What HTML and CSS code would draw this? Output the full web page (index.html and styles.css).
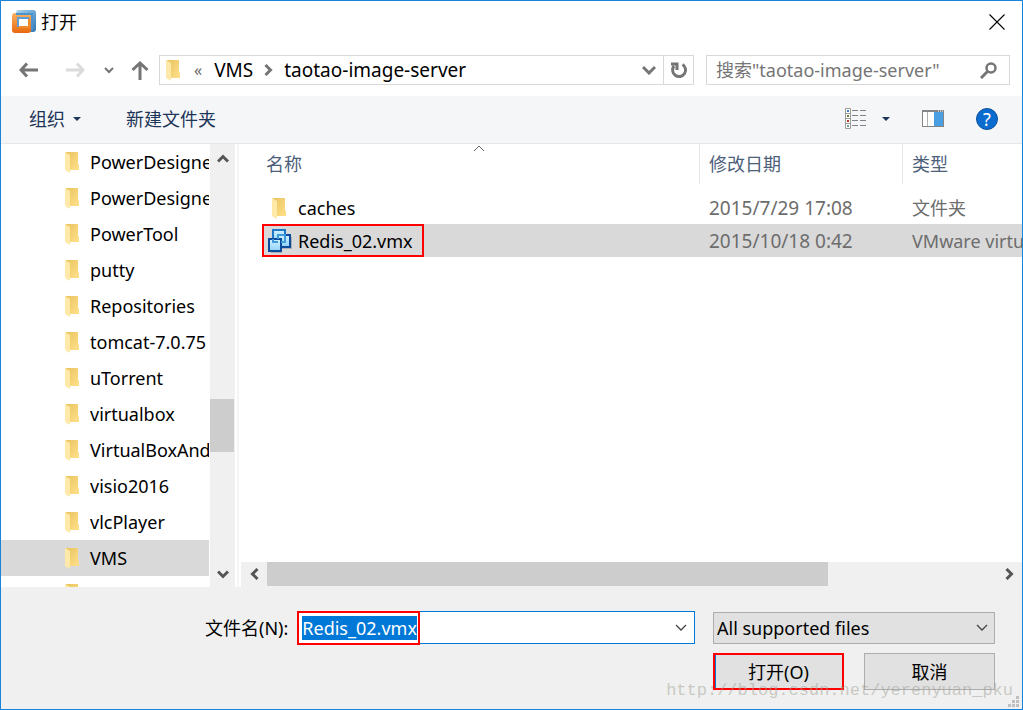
FILE: index.html
```html
<!DOCTYPE html>
<html lang="zh-CN">
<head>
<meta charset="utf-8">
<title>打开</title>
<link rel="stylesheet" href="styles.css">
</head>
<body>
<svg class="defs" aria-hidden="true">
  <defs>
    <linearGradient id="gBack" x1="0" y1="0" x2="1" y2="1"><stop offset="0" stop-color="#e9c35f"/><stop offset="1" stop-color="#ffe08a"/></linearGradient>
    <linearGradient id="gBlue" x1="0" y1="0" x2="1" y2="1"><stop offset="0" stop-color="#a9d6ee"/><stop offset="1" stop-color="#2f75b5"/></linearGradient>
    <linearGradient id="gOrange" x1="0" y1="0" x2="0" y2="1"><stop offset="0" stop-color="#fbb264"/><stop offset="1" stop-color="#e8680c"/></linearGradient>
    <linearGradient id="gVm" x1="0" y1="0" x2="0" y2="1"><stop offset="0" stop-color="#d3f2ff"/><stop offset="1" stop-color="#8fd2f8"/></linearGradient>
    <symbol id="folder" viewBox="0 0 15 22">
      <path d="M1 1H13V13L14 14V19H4Z" fill="url(#gBack)"/>
      <path d="M0 1L5 4V22L0 19Z" fill="#ffe9a8"/>
    </symbol>
  </defs>
</svg>
<main class="dialog">
  <header class="titlebar">
    <svg class="app-icon" width="24" height="24" viewBox="0 0 24 24" aria-hidden="true">
      <rect x="4" y="0" width="20" height="22" rx="3" fill="url(#gBlue)"/>
      <path d="M3 3H16Q19 3 19 6V20Q19 23 16 23H3Q0 23 0 20V6Q0 3 3 3Z" fill="url(#gOrange)"/>
      <path d="M4 4H20V20" fill="none" stroke="#4d94cd" stroke-width="2"/>
      <rect x="6" y="8" width="11" height="9" fill="#fff" stroke="#f08a2c" stroke-width="2"/>
      <path d="M6 17V8H17" fill="none" stroke="#5b9fd4" stroke-width="2"/>
    </svg>
    <h1 class="title">打开</h1>
    <button class="icon-btn close" aria-label="关闭"><svg width="16" height="16" viewBox="0 0 16 16"><path d="M0.500 0.500L15.500 15.500M15.500 0.500L0.500 15.500" stroke="#000" stroke-width="1.100"/></svg></button>
  </header>

  <nav class="navbar">
    <button class="icon-btn" aria-label="后退"><svg width="20" height="16" viewBox="0 0 20 16"><path d="M8 1.500L2 8L8 14.500M2 8H19" class="stroke3"/></svg></button>
    <button class="icon-btn forward" aria-label="前进"><svg width="20" height="16" viewBox="0 0 20 16"><path d="M12 1.500L18 8L12 14.500M18 8H1" class="stroke3"/></svg></button>
    <button class="icon-btn recent" aria-label="最近位置"><svg width="10" height="7" viewBox="0 0 10 7"><path d="M1 1L5 5L9 1" class="stroke2"/></svg></button>
    <button class="icon-btn up" aria-label="上移"><svg width="18" height="19" viewBox="0 0 18 19"><path d="M1.500 9L9 2L16.500 9M9 2V19" class="stroke3"/></svg></button>
    <div class="address">
      <svg width="15" height="22" aria-hidden="true"><use href="#folder"/></svg>
      <span class="more">«</span>
      <a class="crumb" href="#">VMS</a>
      <svg class="crumb-sep" width="9" height="12" viewBox="0 0 9 12" aria-hidden="true"><path d="M1.500 1L6.500 6L1.500 11" class="stroke3"/></svg>
      <a class="crumb" href="#">taotao-image-server</a>
      <button class="icon-btn history" aria-label="历史记录"><svg width="14" height="10" viewBox="0 0 14 10"><path d="M1 2L7 8L13 2" class="stroke3"/></svg></button>
      <button class="icon-btn refresh" aria-label="刷新"><svg width="18" height="18" viewBox="0 0 18 18"><path d="M12.500 3.500A6.500 6.500 0 1 1 4 5M1 3H7V9" class="stroke3"/></svg></button>
    </div>
    <div class="search">
      <input class="search-input" type="text" aria-label="搜索" placeholder='搜索"taotao-image-server"'>
      <svg width="17" height="17" viewBox="0 0 17 17" aria-hidden="true"><circle cx="11" cy="6" r="4.500" fill="none" stroke="#757575" stroke-width="2.500"/><path d="M7.500 9.500L1 16" class="stroke3"/></svg>
    </div>
  </nav>

  <div class="toolbar">
    <button class="tool">组织 <svg width="8" height="4" viewBox="0 0 8 4" aria-hidden="true"><path d="M0 0H8L4 4Z" fill="#1c3558"/></svg></button>
    <button class="tool">新建文件夹</button>
    <div class="view-tools">
      <button class="icon-btn" aria-label="更改视图">
        <svg width="22" height="21" viewBox="0 0 22 21"><path d="M.5 .5H5.500V20.500H.5ZM.5 5.500H5.500M.5 10.500H5.500M.5 15.500H5.500" fill="#fff" stroke="#9b9b9b"/><path d="M2 2h2v2h-2z" fill="#3b7fc4"/><path d="M2 7h2v2h-2z" fill="#6f7c31"/><path d="M2 12h2v2h-2z" fill="#b8341e"/><path d="M2 17h2v2h-2z" fill="#7ba394"/><path d="M7 2.500h6M15 2.500h6M7 7.500h6M15 7.500h6M7 12.500h6M15 12.500h6M7 17.500h6M15 17.500h6" stroke="#7d8288"/></svg>
      </button>
      <button class="icon-btn view-menu" aria-label="视图菜单"><svg width="8" height="4" viewBox="0 0 8 4"><path d="M0 0H8L4 4Z" fill="#1c3558"/></svg></button>
      <button class="icon-btn preview" aria-label="预览窗格">
        <svg width="22" height="17" viewBox="0 0 22 17"><rect x=".5" y=".5" width="21" height="16" fill="#fff" stroke="#858585"/><path d="M0 1H22" stroke="#858585" stroke-width="2"/><path d="M16 1h1M18 1h1M20 1h1" stroke="#fff"/><path d="M5.500 2V16" stroke="#b0b0b0"/><rect x="12" y="2" width="9" height="14" fill="#4a9fe2"/></svg>
      </button>
      <button class="icon-btn help" aria-label="帮助">?</button>
    </div>
  </div>

  <div class="browser">
    <ul class="tree">
      <li class="node"><svg width="15" height="22"><use href="#folder"/></svg>PowerDesigner</li>
      <li class="node"><svg width="15" height="22"><use href="#folder"/></svg>PowerDesigner</li>
      <li class="node"><svg width="15" height="22"><use href="#folder"/></svg>PowerTool</li>
      <li class="node"><svg width="15" height="22"><use href="#folder"/></svg>putty</li>
      <li class="node"><svg width="15" height="22"><use href="#folder"/></svg>Repositories</li>
      <li class="node"><svg width="15" height="22"><use href="#folder"/></svg>tomcat-7.0.75</li>
      <li class="node"><svg width="15" height="22"><use href="#folder"/></svg>uTorrent</li>
      <li class="node"><svg width="15" height="22"><use href="#folder"/></svg>virtualbox</li>
      <li class="node"><svg width="15" height="22"><use href="#folder"/></svg>VirtualBoxAndroid</li>
      <li class="node"><svg width="15" height="22"><use href="#folder"/></svg>visio2016</li>
      <li class="node"><svg width="15" height="22"><use href="#folder"/></svg>vlcPlayer</li>
      <li class="node selected"><svg width="15" height="22"><use href="#folder"/></svg>VMS</li>
      <li class="node"><svg width="15" height="22"><use href="#folder"/></svg></li>
    </ul>
    <div class="vscroll">
      <button class="icon-btn" aria-label="向上滚动"><svg width="12" height="9" viewBox="0 0 12 9"><path d="M1 7.500L6 2.500L11 7.500" class="stroke-dark"/></svg></button>
      <div class="vtrack"><div class="vthumb"></div></div>
      <button class="icon-btn" aria-label="向下滚动"><svg width="12" height="9" viewBox="0 0 12 9"><path d="M1 1.500L6 6.500L11 1.500" class="stroke-dark"/></svg></button>
    </div>
    <section class="files">
      <div class="list">
        <table class="table">
          <colgroup><col class="col-name"><col class="col-date"><col></colgroup>
          <thead>
            <tr>
              <th class="sorted">名称<svg class="sort" width="12" height="7" viewBox="0 0 12 7" aria-hidden="true"><path d="M1 6L6 1L11 6" fill="none" stroke="#666"/></svg></th>
              <th>修改日期</th>
              <th>类型</th>
            </tr>
          </thead>
          <tbody>
            <tr>
              <td><div class="file"><svg width="24" height="22" viewBox="0 0 24 22" aria-hidden="true"><use href="#folder" x="5" width="15" height="22"/></svg>caches</div></td>
              <td class="date">2015/7/29 17:08</td>
              <td>文件夹</td>
            </tr>
            <tr class="selected">
              <td><div class="file marked"><svg width="24" height="24" viewBox="0 0 24 24" aria-hidden="true">
                <path d="M6 15H14V20H24V8H23V19H14V24H3V23H14Z" fill="#8a949c" opacity=".6"/>
                <rect x="5" y="1" width="12" height="12" fill="url(#gVm)" stroke="#1f78c8" stroke-width="2"/>
                <rect x="10" y="6" width="12" height="12" fill="url(#gVm)" stroke="#0c4a9c" stroke-width="2"/>
                <rect x="1" y="10" width="12" height="12" fill="url(#gVm)" stroke="#0c4a9c" stroke-width="2"/>
                <path d="M5 10V13H10M10 10V6H17V13H13" fill="none" stroke="#3f9add" stroke-width="2"/>
              </svg>Redis_02.vmx</div></td>
              <td class="date">2015/10/18 0:42</td>
              <td>VMware virtual machine configuration</td>
            </tr>
          </tbody>
        </table>
      </div>
      <div class="hscroll">
        <button class="icon-btn" aria-label="向左滚动"><svg width="9" height="12" viewBox="0 0 9 12"><path d="M7.500 1L2.500 6L7.500 11" class="stroke-dark"/></svg></button>
        <div class="htrack"><div class="hthumb"></div></div>
        <button class="icon-btn" aria-label="向右滚动"><svg width="9" height="12" viewBox="0 0 9 12"><path d="M1.500 1L6.500 6L1.500 11" class="stroke-dark"/></svg></button>
      </div>
    </section>
  </div>

  <footer class="footer">
    <label class="label" for="filename">文件名(N):</label>
    <div class="combo">
      <input class="filename" id="filename" type="text" value="Redis_02.vmx">
      <svg width="12" height="8" viewBox="0 0 12 8" aria-hidden="true"><path d="M1 1L6 6L11 1" fill="none" stroke="#444" stroke-width="1.300"/></svg>
      <span class="highlight"></span>
    </div>
    <div class="type">
      <select class="filter" aria-label="文件类型"><option>All supported files</option></select>
      <svg class="arrow" width="12" height="8" viewBox="0 0 12 8" aria-hidden="true"><path d="M1 1L6 6L11 1" fill="none" stroke="#444" stroke-width="1.300"/></svg>
    </div>
    <div class="actions">
      <button class="btn primary">打开(O)</button>
      <button class="btn">取消</button>
    </div>
    <span class="watermark">http://blog.csdn.net/yerenyuan_pku</span>
    <svg class="grip" width="11" height="11" viewBox="0 0 11 11" aria-hidden="true"><path d="M8 0h3v3h-3zM4 4h3v3h-3zM8 4h3v3h-3zM0 8h3v3h-3zM4 8h3v3h-3zM8 8h3v3h-3z" fill="#bfbfbf"/></svg>
  </footer>
</main>
<script src="script.js"></script>
</body>
</html>
```

FILE: styles.css
```css
* {
  box-sizing: border-box;
}

body {
  margin: 0;
  font-family: "Noto Sans", "Noto Sans CJK SC", sans-serif;
  font-size: 18px;
  line-height: 24px;
  color: #000;
}

button,
input,
select {
  font: inherit;
  color: inherit;
}

.defs {
  position: absolute;
  width: 0;
  height: 0;
}

.dialog {
  display: flex;
  flex-direction: column;
  height: 100vh;
  min-height: 400px;
  border: 1px solid #1883d7;
  background: #fff;
  overflow: hidden;
}

.icon-btn {
  display: flex;
  align-items: center;
  justify-content: center;
  flex: none;
  padding: 0;
  border: 0;
  background: none;
}

.stroke3 {
  fill: none;
  stroke: #757575;
  stroke-width: 3;
}

.stroke2 {
  fill: none;
  stroke: #757575;
  stroke-width: 2;
}

.stroke-dark {
  fill: none;
  stroke: #555;
  stroke-width: 3;
}

/* Title bar */
.titlebar {
  display: flex;
  align-items: center;
  height: 42px;
  padding: 0 17px 0 11px;
  gap: 5px;
}

.title {
  flex: 1;
  margin: 0;
  font-size: 18px;
  font-weight: 400;
}

/* Navigation */
.navbar {
  display: flex;
  align-items: center;
  padding: 12px 12px 11px 18px;
}

.forward {
  margin: 0 19px 0 26px;
  opacity: 0.25;
}

.up {
  margin: 0 10px 0 17px;
}

.address,
.search {
  display: flex;
  align-items: center;
  height: 30px;
  border: 1px solid #d9d9d9;
}

.address {
  flex: 1;
  padding-left: 6px;
}

.more {
  margin: 0 12px 0 13px;
  color: #666;
  font-size: 16px;
}

.crumb {
  color: #000;
  font-size: 19px;
  text-decoration: none;
  white-space: nowrap;
}

.crumb-sep {
  margin: 0 11px;
}

.history {
  margin-left: auto;
  width: 28px;
}

.refresh {
  width: 30px;
  height: 28px;
  border-left: 1px solid #d9d9d9;
}

.search {
  width: 304px;
  margin-left: 12px;
  padding: 0 12px 0 9px;
}

.search-input {
  flex: 1;
  min-width: 0;
  padding: 0;
  border: 0;
  outline: 0;
}

.search-input::placeholder {
  color: #757575;
}

/* Toolbar */
.toolbar {
  display: flex;
  align-items: center;
  gap: 45px;
  height: 48px;
  padding: 0 24px 2px 28px;
  border-bottom: 1px solid #e5e7ea;
  background: #f5f6f7;
}

.tool {
  display: flex;
  align-items: center;
  gap: 8px;
  padding: 0;
  border: 0;
  background: none;
  color: #1c3558;
}

.view-tools {
  display: flex;
  align-items: center;
  margin-left: auto;
}

.view-menu {
  margin: 0 32px 0 15px;
}

.help {
  width: 22px;
  height: 22px;
  margin-left: 32px;
  border: 1px solid #0a4f9e;
  border-radius: 50%;
  background: #0a6ccf;
  color: #fff;
}

/* Folder tree and file list */
.browser {
  display: flex;
  flex: 1;
  min-height: 0;
}

.tree {
  width: 208px;
  margin: 0 1px 0 0;
  padding: 0;
  overflow: hidden;
  list-style: none;
}

.node {
  display: flex;
  align-items: center;
  gap: 10px;
  height: 36px;
  padding-left: 64px;
  white-space: nowrap;
}

.node svg {
  flex: none;
}

.selected {
  background: #d9d9d9;
}

.vscroll {
  display: flex;
  flex-direction: column;
  width: 25px;
  background: #f0f0f0;
}

.vscroll .icon-btn {
  width: 25px;
  height: 25px;
}

.vscroll .icon-btn:first-child {
  height: 28px;
}

.vtrack {
  flex: 1;
  display: flex;
  flex-direction: column;
  justify-content: flex-end;
  padding-bottom: 110px;
}

.vthumb {
  width: 24px;
  height: 53px;
  background: #cdcdcd;
}

.files {
  display: flex;
  flex-direction: column;
  flex: 1;
  min-width: 0;
  margin-left: 2px;
  padding-left: 2px;
  border-left: 2px solid #f5f5f5;
}

.list {
  flex: 1;
  min-height: 0;
  padding-left: 21px;
  overflow: hidden;
}

.table {
  width: 100%;
  border-collapse: separate;
  border-spacing: 0;
  table-layout: fixed;
}

.col-name {
  width: 437px;
}

.col-date {
  width: 203px;
}

th {
  height: 40px;
  padding: 0 0 0 9px;
  border-left: 1px solid #e5e5e5;
  color: #4c607a;
  font-weight: 400;
  text-align: left;
}

.sorted {
  position: relative;
  padding-left: 3px;
  border-left-color: transparent;
}

.sort {
  position: absolute;
  top: 1px;
  left: 210px;
}

tbody::before {
  content: "";
  display: block;
  height: 8px;
}

td {
  height: 32px;
  padding: 0 0 0 10px;
  overflow: hidden;
  color: #6d6d6d;
  white-space: nowrap;
}

td:first-child {
  padding: 0;
  color: #000;
}

.date {
  font-size: 19px;
}

.file {
  display: flex;
  align-items: center;
  gap: 7px;
  width: 162px;
  height: 32px;
  padding: 0 5px;
}

.marked {
  height: 33px;
  padding: 0 3px 0 4px;
  border: 2px solid #f00;
  gap: 6px;
}

.hscroll {
  display: flex;
  height: 25px;
  background: #f0f0f0;
}

.hscroll .icon-btn {
  width: 26px;
  height: 24px;
}

.htrack {
  flex: 1;
}

.hthumb {
  width: 77%;
  height: 24px;
  background: #cdcdcd;
}

/* Footer */
.footer {
  position: relative;
  display: grid;
  grid-template-columns: auto minmax(0, 1fr) 282px;
  align-items: center;
  row-gap: 9px;
  padding: 24px 27px 19px 204px;
  background: #f0f0f0;
}

.label {
  margin-right: 9px;
}

.combo {
  position: relative;
  display: flex;
  align-items: center;
  height: 33px;
  margin-right: 18px;
  padding: 0 7px 0 4px;
  border: 1px solid #0078d7;
  background: #fff;
}

.filename {
  flex: 1;
  min-width: 0;
  padding: 0;
  border: 0;
  outline: 0;
  background: none;
}

.filename::selection {
  background: #0078d7;
  color: #fff;
}

.highlight {
  position: absolute;
  top: -1px;
  left: -1px;
  width: 123px;
  height: 34px;
  border: 2px solid #f00;
  pointer-events: none;
}

.type {
  position: relative;
}

.filter {
  display: block;
  width: 100%;
  height: 32px;
  padding: 0 3px;
  border: 1px solid #adadad;
  border-radius: 0;
  background: #e1e1e1;
  appearance: none;
}

.arrow {
  position: absolute;
  top: 12px;
  right: 7px;
  pointer-events: none;
}

.actions {
  grid-column: 3;
  display: grid;
  grid-template-columns: 1fr 1fr;
  gap: 20px;
}

.btn {
  height: 37px;
  padding: 0;
  border: 1px solid #adadad;
  background: #e1e1e1;
}

.primary {
  border: 2px solid #f00;
  box-shadow: inset 1px 0 #0078d7;
}

.watermark {
  position: absolute;
  right: 9px;
  bottom: 6px;
  color: rgba(160, 160, 150, 0.5);
  font-family: "Liberation Mono", monospace;
  font-size: 17px;
  pointer-events: none;
}

.grip {
  position: absolute;
  right: 3px;
  bottom: 2px;
}
```

FILE: script.js
```js
const filename = document.getElementById("filename");
filename.focus();
filename.select();
```
